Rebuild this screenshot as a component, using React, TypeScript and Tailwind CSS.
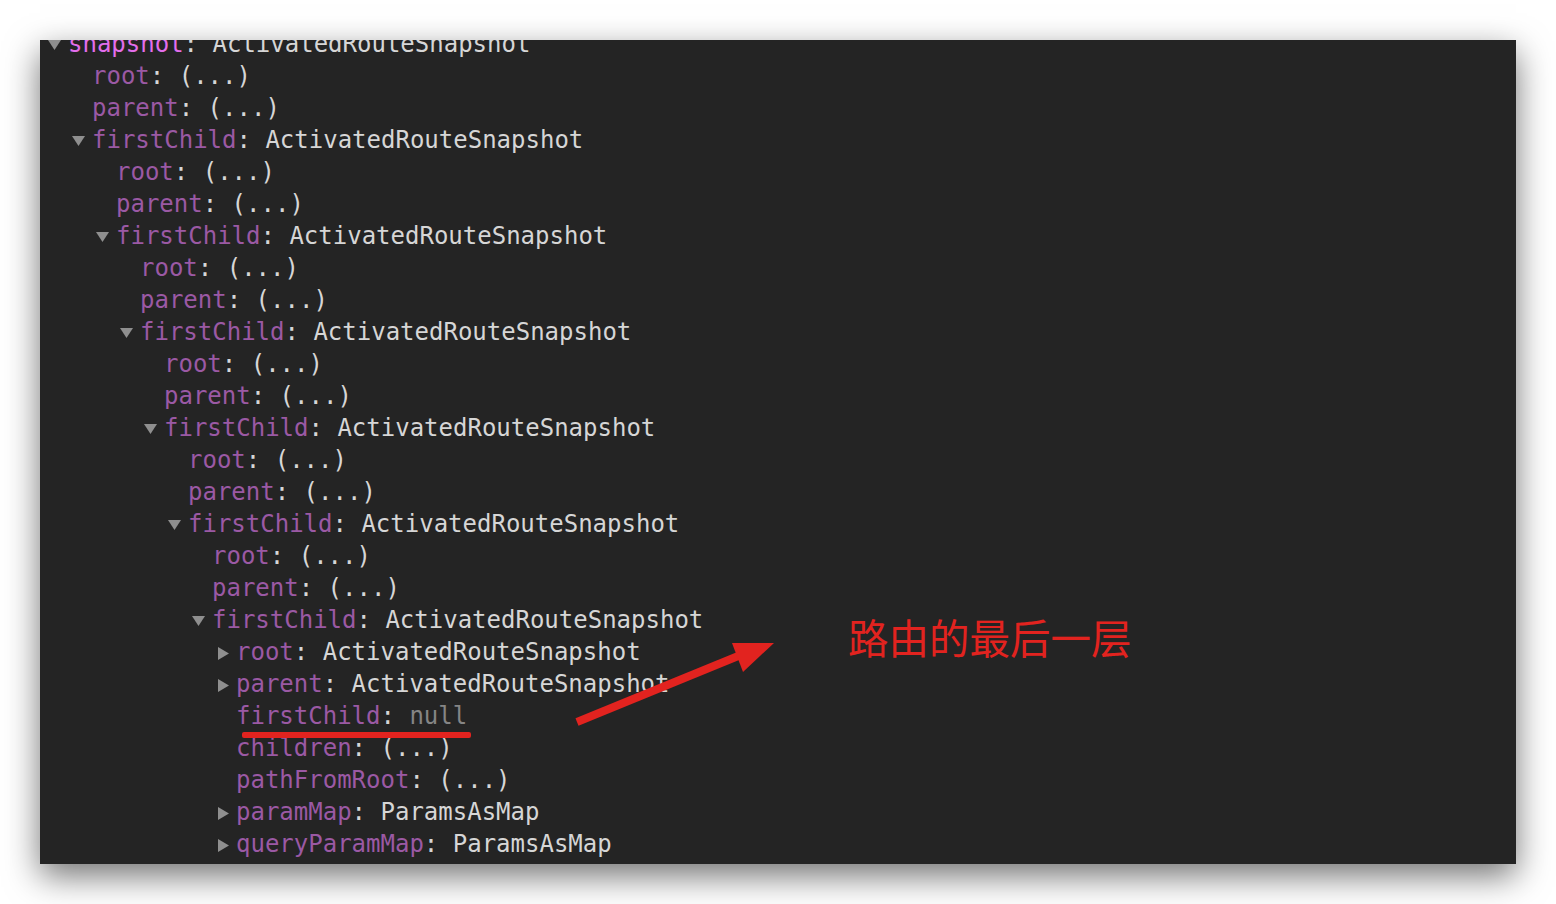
import React from "react";

type Node = {
  k: string;
  v: string;
  t?: "down" | "right";
  bright?: boolean;
  nul?: boolean;
  children?: Node[];
};

const leaf: Node[] = [
  { k: "root", v: "ActivatedRouteSnapshot", t: "right" },
  { k: "parent", v: "ActivatedRouteSnapshot", t: "right" },
  { k: "firstChild", v: "null", nul: true },
  { k: "children", v: "(...)" },
  { k: "pathFromRoot", v: "(...)" },
  { k: "paramMap", v: "ParamsAsMap", t: "right" },
  { k: "queryParamMap", v: "ParamsAsMap", t: "right" },
];

function level(children: Node[]): Node[] {
  return [
    { k: "root", v: "(...)" },
    { k: "parent", v: "(...)" },
    { k: "firstChild", v: "ActivatedRouteSnapshot", t: "down", children },
  ];
}

let inner: Node[] = leaf;
for (let i = 0; i < 6; i++) inner = level(inner);

const tree: Node = {
  k: "snapshot",
  v: "ActivatedRouteSnapshot",
  t: "down",
  bright: true,
  children: inner,
};

function Tri({ t }: { t?: "down" | "right" }) {
  return (
    <span className="flex w-[21px] shrink-0 items-center">
      {t === "down" && (
        <svg width="13" height="10" viewBox="0 0 13 10" className="ml-[1px] mt-[1px]">
          <polygon points="0,0 13,0 6.5,10" fill="#8f8f8f" />
        </svg>
      )}
      {t === "right" && (
        <svg width="11" height="13" viewBox="0 0 11 13" className="ml-[3px] mt-[2px]">
          <polygon points="0,0 11,6.5 0,13" fill="#8f8f8f" />
        </svg>
      )}
    </span>
  );
}

function Row({ n }: { n: Node }) {
  return (
    <div>
      <div className="flex h-[32px] items-center whitespace-pre">
        <Tri t={n.t} />
        <span className={n.bright ? "text-[#e36eec]" : "text-[#9b59a4]"}>{n.k}</span>
        <span className="text-[#d6d6d6]">: </span>
        <span className={n.nul ? "text-[#858585]" : "text-[#d6d6d6]"}>{n.v}</span>
      </div>
      {n.children && (
        <div className="pl-[24px]">
          {n.children.map((c, i) => (
            <Row key={i} n={c} />
          ))}
        </div>
      )}
    </div>
  );
}

export default function App() {
  return (
    <div className="relative h-[904px] w-[1556px] overflow-hidden bg-white">
      <div className="px-[40px] pt-[40px]">
        <div
          className="relative h-[824px] w-[1476px] overflow-hidden bg-[#242424] shadow-[0_12px_32px_rgba(0,0,0,0.55)]"
          style={{ fontFamily: '"DejaVu Sans Mono", "Liberation Mono", monospace' }}
        >
          <div className="-mt-[12px] pl-[7px] text-[24px] leading-[32px]">
            <Row n={tree} />
          </div>
        </div>
      </div>

      <div className="absolute left-[242px] top-[732px] h-[6px] w-[229px] rounded-[2px] bg-[#e2231f]" />

      <svg className="absolute left-0 top-0" width="1556" height="904" viewBox="0 0 1556 904">
        <line x1="577" y1="722" x2="748" y2="652" stroke="#e2231f" strokeWidth="8" />
        <polygon points="732,643 774,643 743,672" fill="#e2231f" />
      </svg>

      <div
        className="absolute left-[848px] top-[617px] whitespace-nowrap text-[40.5px] leading-[40px] text-[#e2231f]"
        style={{ fontFamily: '"Noto Sans CJK SC", "Noto Sans", sans-serif' }}
      >
        路由的最后一层
      </div>
    </div>
  );
}
